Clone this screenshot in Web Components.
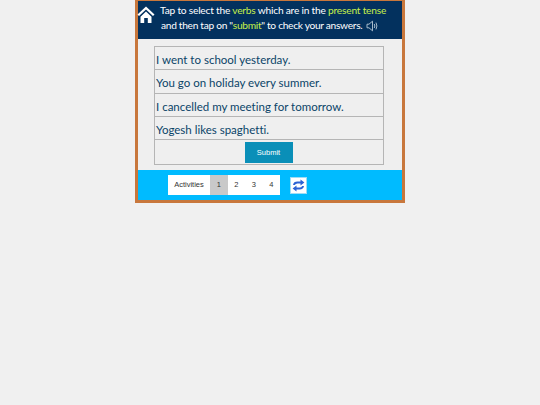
<!DOCTYPE html>
<html>
<head>
<meta charset="utf-8">
<style>
  html, body { margin: 0; padding: 0; background: #f0f0f0; }
  body { font-family: "Liberation Sans", sans-serif; }
</style>
</head>
<body>
<activity-frame>
  <instruction-bar></instruction-bar>
  <sentence-table>
    <sentence-row>I went to school yesterday.</sentence-row>
    <sentence-row>You go on holiday every summer.</sentence-row>
    <sentence-row>I cancelled my meeting for tomorrow.</sentence-row>
    <sentence-row>Yogesh likes spaghetti.</sentence-row>
  </sentence-table>
  <activity-nav></activity-nav>
</activity-frame>
<script>
class ActivityFrame extends HTMLElement {
  connectedCallback() {
    this.attachShadow({ mode: 'open' });
    this.shadowRoot.innerHTML = `
      <style>
        :host {
          display: block;
          box-sizing: border-box;
          width: 270px;
          height: 203px;
          margin-left: 135px;
          border: 3px solid #c8773c;
          border-top-width: 1px;
          background: #efefef;
        }
      </style>
      <slot></slot>
    `;
  }
}

class InstructionBar extends HTMLElement {
  connectedCallback() {
    this.attachShadow({ mode: 'open' });
    this.shadowRoot.innerHTML = `
      <style>
        :host {
          display: flex;
          box-sizing: border-box;
          height: 38px;
          background: #03315e;
          color: #fff;
          font: 10.2px/15px Lato, sans-serif;
          font-variant-ligatures: none;
          letter-spacing: -0.21px;
          padding: 2px 0 0 0;
        }
        .home { width: 18px; height: 18px; margin: 3px 0 0 -1px; flex: none; }
        .text { margin-left: 5px; white-space: nowrap; }
        .line2 { padding-left: 1px; display: flex; align-items: center; letter-spacing: -0.3px; }
        b { font-weight: 400; color: #c6f04a; }
        .sound { width: 13px; height: 12px; margin: 1px 0 0 4px; }
      </style>
      <svg class="home" viewBox="0 0 18 18">
        <path d="M9 0.5 L0.5 8.5 L2 10 L9 3.4 L16 10 L17.5 8.5 Z" fill="#fff"/>
        <path d="M3.5 10.8 L9 5.6 L14.5 10.8 V17 H10.8 V12 H7.2 V17 H3.5 Z" fill="#fff"/>
      </svg>
      <div class="text">
        <div>Tap to select the <b>verbs</b> which are in the <b>present tense</b></div>
        <div class="line2"><span>and then tap on "<b>submit</b>" to check your answers.</span>
          <svg class="sound" viewBox="0 0 13 12" fill="none" stroke="#b9c9d8" stroke-width="0.9">
            <path d="M1 4.2 H3 L6.5 1.2 V10.8 L3 7.8 H1 Z"/>
            <path d="M8.3 4 Q9.3 6 8.3 8"/>
            <path d="M10 2.6 Q11.8 6 10 9.4"/>
          </svg>
        </div>
      </div>
    `;
  }
}

class SentenceTable extends HTMLElement {
  connectedCallback() {
    this.attachShadow({ mode: 'open' });
    this.shadowRoot.innerHTML = `
      <style>
        :host {
          display: block;
          box-sizing: border-box;
          width: 230px;
          height: 119px;
          margin: 7px 0 0 16px;
          border: 1px solid #b5b5b5;
        }
        .foot {
          display: flex;
          justify-content: center;
          padding-top: 2px;
        }
        button {
          width: 48px;
          height: 21px;
          margin-left: -1px;
          border: 0;
          padding: 0;
          background: #0a8fb8;
          color: #fff;
          font: 7.5px "Liberation Sans", sans-serif;
        }
      </style>
      <slot></slot>
      <div class="foot"><button>Submit</button></div>
    `;
  }
}

class SentenceRow extends HTMLElement {
  connectedCallback() {
    this.attachShadow({ mode: 'open' });
    this.shadowRoot.innerHTML = `
      <style>
        :host {
          display: block;
          box-sizing: border-box;
          height: 23.25px;
          border-bottom: 1px solid #b5b5b5;
          padding-left: 1px;
          color: #0a4468;
          font: 11.5px/26.4px Lato, sans-serif;
          font-variant-ligatures: none;
          white-space: nowrap;
        }
      </style>
      <slot></slot>
    `;
  }
}

class ActivityNav extends HTMLElement {
  connectedCallback() {
    this.attachShadow({ mode: 'open' });
    this.shadowRoot.innerHTML = `
      <style>
        :host {
          display: flex;
          align-items: center;
          box-sizing: border-box;
          height: 30px;
          margin-top: 5px;
          padding-left: 30px;
          background: #00bbff;
        }
        .pager {
          display: flex;
          height: 20px;
          background: #fff;
          color: #333;
          font: 7.5px/20px "Liberation Sans", sans-serif;
          text-align: center;
        }
        .pager span { width: 17.5px; }
        .pager .label { width: 42px; }
        .pager .on { background: #c9c9c9; }
        .swap {
          display: flex;
          align-items: center;
          justify-content: center;
          box-sizing: border-box;
          width: 17px;
          height: 17px;
          margin-left: 10px;
          background: #fff;
          border: 1px solid #9fdcf5;
        }
        svg { width: 13px; height: 13px; }
      </style>
      <div class="pager">
        <span class="label">Activities</span>
        <span class="on">1</span><span>2</span><span>3</span><span>4</span>
      </div>
      <div class="swap">
        <svg viewBox="0 0 13 13" fill="#2c62d4">
          <path d="M1 6 Q1.5 2.6 5.5 2.6 H8.5 V0.6 L12.4 3.6 L8.5 6.4 V4.5 H5.5 Q3.6 4.5 2.8 6 Z"/>
          <path d="M12 7 Q11.5 10.4 7.5 10.4 H4.5 V12.4 L0.6 9.4 L4.5 6.6 V8.5 H7.5 Q9.4 8.5 10.2 7 Z"/>
        </svg>
      </div>
    `;
  }
}

customElements.define('activity-frame', ActivityFrame);
customElements.define('instruction-bar', InstructionBar);
customElements.define('sentence-table', SentenceTable);
customElements.define('sentence-row', SentenceRow);
customElements.define('activity-nav', ActivityNav);
</script>
</body>
</html>
